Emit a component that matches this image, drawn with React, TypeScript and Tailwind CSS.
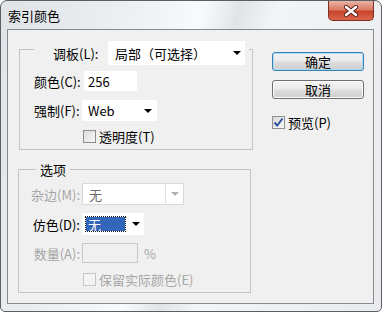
import React from 'react';

function Arrow({ disabled }: { disabled?: boolean }) {
  return (
    <span
      className={
        'block w-0 h-0 border-l-[4px] border-r-[4px] border-t-[4px] border-l-transparent border-r-transparent ' +
        (disabled ? 'border-t-[#b0b0b0]' : 'border-t-black')
      }
    />
  );
}

function Check({ checked, disabled }: { checked?: boolean; disabled?: boolean }) {
  return (
    <span
      className={
        'relative flex items-center justify-center w-[13px] h-[13px] border ' +
        (disabled ? 'border-[#c6c6c6] bg-[#f4f4f4]' : 'border-[#8e8f8f] bg-[linear-gradient(135deg,#dcdcdc,#f8f8f8)]')
      }
    >
      {checked && (
        <svg width="11" height="11" viewBox="0 0 11 11" className="absolute">
          <path d="M1.5 5.5 L4.2 8.5 L9.5 1.5" fill="none" stroke="#2a4f9c" strokeWidth="1.9" />
        </svg>
      )}
    </span>
  );
}

function Button({ label, focused }: { label: string; focused?: boolean }) {
  return (
    <div
      className={
        'w-[92px] h-[19px] rounded-[3px] border flex items-center justify-center leading-none bg-[linear-gradient(to_bottom,#f3f3f3_0%,#ebebeb_48%,#dddddd_52%,#cfcfcf_100%)] ' +
        (focused ? 'border-[#3c7fb1] shadow-[inset_0_0_0_1px_#a8dcf5]' : 'border-[#707070] shadow-[inset_0_0_0_1px_#fbfbfb]')
      }
    >
      {label}
    </div>
  );
}

export default function App() {
  return (
    <div className="relative w-[382px] h-[312px] overflow-hidden rounded-t-[7px] rounded-b-[5px] border border-[#5b5f64] bg-[linear-gradient(105deg,#dfe3e7_0%,#eef0f2_30%,#f9fafb_44%,#e1e4e7_52%,#f3f4f5_60%,#e9ebee_100%)] font-['Noto_Sans_CJK_SC',sans-serif] text-[13px] text-black">
      <div className="h-[28px] flex items-center pl-[7px] pt-[1px] leading-none">索引颜色</div>

      <div className="absolute top-0 right-[7px] w-[46px] h-[20px] rounded-b-[5px] border border-t-0 border-[#7a2e22] bg-[linear-gradient(to_bottom,#eab3a5_0%,#dd7b66_45%,#c8432b_55%,#d9684c_100%)] flex items-center justify-center">
        <svg width="16" height="12" viewBox="0 0 16 12">
          <path d="M3 2 L13 10 M13 2 L3 10" stroke="#5a2016" strokeWidth="4.2" strokeLinecap="round" />
          <path d="M3 2 L13 10 M13 2 L3 10" stroke="#ffffff" strokeWidth="2.4" strokeLinecap="round" />
        </svg>
      </div>

      <div className="ml-[6px] w-[367px] h-[275px] border border-[#858a91] bg-[#f0f0f0] flex">
        <div className="pl-[11px] pt-[19px]">
          {/* 调板 group */}
          <div className="relative w-[234px] h-[101px] border border-[#c4c4c4] pt-[21px] pl-[14px]">
            <div className="absolute left-[14px] top-[-9px] h-[24px] flex items-center bg-[#f0f0f0] pl-[19px] pr-[4px]">
              <span className="w-[55px] leading-none">调板(L):</span>
              <div className="w-[137px] h-[24px] bg-white flex items-center justify-between pl-[7px] pr-[4px] leading-none">
                <span>局部（可选择）</span>
                <Arrow />
              </div>
            </div>
            <div className="flex items-center h-[20px]">
              <span className="w-[50px] leading-none">颜色(C):</span>
              <div className="w-[53px] h-[20px] bg-white flex items-center pl-[4px] leading-none">256</div>
            </div>
            <div className="mt-[9px] flex items-center h-[21px]">
              <span className="w-[48px] leading-none">强制(F):</span>
              <div className="w-[75px] h-[21px] bg-white flex items-center justify-between pl-[6px] pr-[5px] leading-none">
                <span>Web</span>
                <Arrow />
              </div>
            </div>
            <div className="mt-[8px] flex items-center h-[14px] pl-[49px]">
              <Check />
              <span className="ml-[3px] leading-none">透明度(T)</span>
            </div>
          </div>

          {/* 选项 group */}
          <div className="relative mt-[19px] -ml-[1px] w-[233px] h-[124px] border border-[#c4c4c4] pt-[13px]">
            <div className="absolute left-[17px] top-[-10px] h-[18px] flex items-center bg-[#f0f0f0] px-[4px] leading-none">选项</div>
            <div className="flex items-center h-[22px]">
              <span className="w-[63px] text-right pr-[2px] leading-none text-[#a6a6a6]">杂边(M):</span>
              <div className="w-[102px] h-[22px] bg-white border border-[#dadada] flex items-center leading-none">
                <span className="flex-1 pl-[6px] text-[#6d6d6d]">无</span>
                <span className="w-px h-full bg-[#e4e4e4]" />
                <span className="w-[17px] flex justify-center"><Arrow disabled /></span>
              </div>
            </div>
            <div className="mt-[8px] flex items-center h-[22px]">
              <span className="w-[63px] text-right pr-[2px] leading-none">仿色(D):</span>
              <div className="w-[62px] h-[22px] bg-white flex items-center pl-[4px] pr-[4px] justify-between">
                <span className="w-[39px] h-[14px] bg-[#3366b8] outline outline-1 outline-dotted outline-[#1a1a1a] text-white flex items-center pl-[2px] leading-none">无</span>
                <Arrow />
              </div>
            </div>
            <div className="mt-[8px] flex items-center h-[20px]">
              <span className="w-[63px] text-right pr-[2px] leading-none text-[#a6a6a6]">数量(A):</span>
              <div className="w-[56px] h-[20px] border border-[#c9c9c9] bg-[#f0f0f0]" />
              <span className="ml-[6px] leading-none text-[#a6a6a6]">%</span>
            </div>
            <div className="mt-[9px] flex items-center h-[14px] pl-[64px]">
              <Check disabled />
              <span className="ml-[3px] leading-none text-[#a6a6a6]">保留实际颜色(E)</span>
            </div>
          </div>
        </div>

        <div className="ml-[19px] pt-[22px]">
          <Button label="确定" focused />
          <div className="mt-[9px]">
            <Button label="取消" />
          </div>
          <div className="mt-[17px] flex items-center h-[13px]">
            <Check checked />
            <span className="ml-[3px] leading-none">预览(P)</span>
          </div>
        </div>
      </div>
    </div>
  );
}
